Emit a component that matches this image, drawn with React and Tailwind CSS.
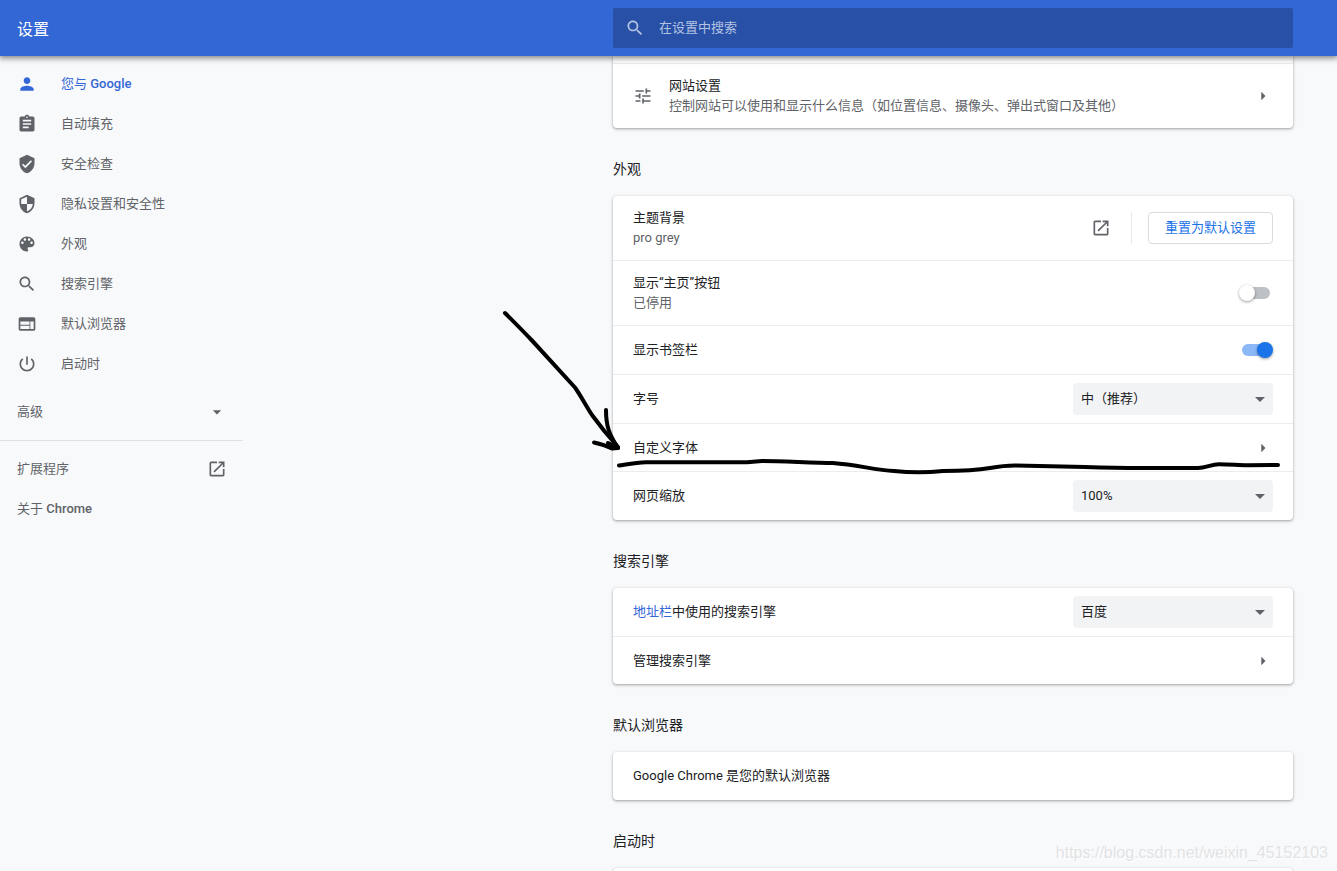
import React from "react";

const PATHS = {
  person:
    "M12 12c2.21 0 4-1.79 4-4s-1.79-4-4-4-4 1.79-4 4 1.79 4 4 4zm0 2c-2.67 0-8 1.34-8 4v2h16v-2c0-2.66-5.33-4-8-4z",
  assignment:
    "M19 3h-4.18C14.4 1.84 13.3 1 12 1c-1.3 0-2.4.84-2.82 2H5c-1.1 0-2 .9-2 2v14c0 1.1.9 2 2 2h14c1.1 0 2-.9 2-2V5c0-1.1-.9-2-2-2zm-7 0c.55 0 1 .45 1 1s-.45 1-1 1-1-.45-1-1 .45-1 1-1zm2 14H7v-2h7v2zm3-4H7v-2h10v2zm0-4H7V7h10v2z",
  verified:
    "M12 1L3 5v6c0 5.55 3.84 10.74 9 12 5.16-1.26 9-6.45 9-12V5l-9-4zm-2 16l-4-4 1.41-1.41L10 14.17l6.59-6.59L18 9l-8 8z",
  security:
    "M12 1L3 5v6c0 5.55 3.84 10.74 9 12 5.16-1.26 9-6.45 9-12V5l-9-4zm0 10.99h7c-.53 4.12-3.28 7.79-7 8.94V12H5V6.3l7-3.11v8.8z",
  palette:
    "M12 3c-4.97 0-9 4.03-9 9s4.03 9 9 9c.83 0 1.5-.67 1.5-1.5 0-.39-.15-.74-.39-1.01-.23-.26-.38-.61-.38-.99 0-.83.67-1.5 1.5-1.5H16c2.76 0 5-2.24 5-5 0-4.42-4.03-8-9-8zm-5.5 9c-.83 0-1.5-.67-1.5-1.5S5.67 9 6.5 9 8 9.67 8 10.5 7.33 12 6.5 12zm3-4C8.67 8 8 7.33 8 6.5S8.67 5 9.5 5s1.5.67 1.5 1.5S10.33 8 9.5 8zm5 0c-.83 0-1.5-.67-1.5-1.5S13.67 5 14.5 5s1.5.67 1.5 1.5S15.33 8 14.5 8zm3 4c-.83 0-1.5-.67-1.5-1.5S16.67 9 17.5 9s1.5.67 1.5 1.5-.67 1.5-1.5 1.5z",
  search:
    "M15.5 14h-.79l-.28-.27C15.41 12.59 16 11.11 16 9.5 16 5.91 13.09 3 9.5 3S3 5.91 3 9.5 5.91 16 9.5 16c1.61 0 3.09-.59 4.23-1.57l.27.28v.79l5 4.99L20.49 19l-4.99-5zm-6 0C7.01 14 5 11.99 5 9.5S7.01 5 9.5 5 14 7.01 14 9.5 11.99 14 9.5 14z",
  web: "M20 4H4c-1.1 0-1.99.9-1.99 2L2 18c0 1.1.9 2 2 2h16c1.1 0 2-.9 2-2V6c0-1.1-.9-2-2-2zm-5 14H4v-4h11v4zm0-5H4V9h11v4zm5 5h-4V9h4v9z",
  power:
    "M13 3h-2v10h2V3zm4.83 2.17l-1.42 1.42C17.99 7.86 19 9.81 19 12c0 3.87-3.13 7-7 7s-7-3.13-7-7c0-2.19 1.01-4.14 2.58-5.42L6.17 5.17C4.23 6.82 3 9.26 3 12c0 4.97 4.03 9 9 9s9-4.03 9-9c0-2.74-1.23-5.18-3.17-6.83z",
  down: "M7 10l5 5 5-5z",
  right: "M10 7l5 5-5 5z",
  launch:
    "M19 19H5V5h7V3H5c-1.11 0-2 .9-2 2v14c0 1.1.89 2 2 2h14c1.1 0 2-.9 2-2v-7h-2v7zM14 3v2h3.59l-9.83 9.83 1.41 1.41L19 6.41V10h2V3h-7z",
  tune: "M3 17v2h6v-2H3zM3 5v2h10V5H3zm10 16v-2h8v-2h-8v-2h-2v6h2zM7 9v2H3v2h4v2h2V9H7zm14 4v-2H11v2h10zm-6-4h2V7h4V5h-4V3h-2v6z",
};

function Icon({ name, className = "" }) {
  return (
    <svg viewBox="0 0 24 24" fill="currentColor" aria-hidden="true" className={`size-5 shrink-0 ${className}`}>
      <path d={PATHS[name]} />
    </svg>
  );
}

const NAV = [
  { icon: "person", label: "您与 ", latin: "Google", active: true },
  { icon: "assignment", label: "自动填充" },
  { icon: "verified", label: "安全检查" },
  { icon: "security", label: "隐私设置和安全性" },
  { icon: "palette", label: "外观" },
  { icon: "search", label: "搜索引擎" },
  { icon: "web", label: "默认浏览器" },
  { icon: "power", label: "启动时" },
];

function Sidebar() {
  return (
    <aside className="w-[243px] shrink-0 pt-2 text-[#5f6368]">
      <nav>
        {NAV.map((item) => (
          <a
            key={item.label}
            href="#"
            className={`flex h-10 items-center gap-6 pl-[17px] ${item.active ? "text-[#3367d6]" : ""}`}
          >
            <Icon name={item.icon} />
            <span>
              {item.label}
              {item.latin && <span className="font-medium">{item.latin}</span>}
            </span>
          </a>
        ))}
        <button type="button" className="mt-2 flex h-10 w-full items-center justify-between pr-4 pl-[17px]">
          <span>高级</span>
          <Icon name="down" />
        </button>
        <div className="my-2 h-px bg-[#e0e1e3]" />
        <a href="#" className="flex h-10 items-center justify-between pr-4 pl-[17px]">
          <span>扩展程序</span>
          <Icon name="launch" />
        </a>
        <a href="#" className="flex h-10 items-center pl-[17px]">
          <span>
            关于 <span className="font-medium">Chrome</span>
          </span>
        </a>
      </nav>
    </aside>
  );
}

function Section({ title, overlay, children }) {
  return (
    <section>
      <h2 className="flex h-[68px] items-center pt-4 pb-0.5 text-sm text-[#202124]">{title}</h2>
      <div className="relative">
        <Card className="rounded">{children}</Card>
        {overlay}
      </div>
    </section>
  );
}

function Card({ className = "", children }) {
  return (
    <div
      className={`divide-y divide-[#ececec] bg-white shadow-[0_1px_2px_0_rgba(60,64,67,0.3),0_1px_3px_1px_rgba(60,64,67,0.15)] ${className}`}
    >
      {children}
    </div>
  );
}

function Row({ tall, children }) {
  return <div className={`box-content flex items-center px-5 ${tall ? "h-16" : "h-12"}`}>{children}</div>;
}

function LinkRow({ tall, icon, title, detail }) {
  return (
    <button type="button" className={`box-content block w-full text-left ${tall ? "h-16" : "h-[47px]"}`}>
      <span className="flex h-full items-center px-5">
        {icon && <Icon name={icon} className="mr-4 text-[#5f6368]" />}
        <span className="flex-1">
          <span className="block">{title}</span>
          {detail && <span className="block text-[#5f6368]">{detail}</span>}
        </span>
        <Icon name="right" className="text-[#5f6368]" />
      </span>
    </button>
  );
}

function Toggle({ id, defaultChecked }) {
  return (
    <input
      id={id}
      type="checkbox"
      role="switch"
      defaultChecked={defaultChecked}
      className="relative mr-[3px] h-3 w-7 shrink-0 appearance-none rounded-full bg-[#bdc1c6] before:absolute before:-top-0.5 before:-left-[3px] before:size-4 before:rounded-full before:bg-white before:shadow-[0_1px_3px_0_rgba(0,0,0,0.4)] checked:bg-[#8cb8f8] checked:before:left-[15px] checked:before:bg-[#1a73e8]"
    />
  );
}

function Select({ id, options }) {
  return (
    <div className="relative w-[200px] shrink-0">
      <select
        id={id}
        className="h-8 w-full appearance-none rounded bg-[#f1f3f4] pr-8 pl-2 text-[#202124]"
      >
        {options.map((o) => (
          <option key={o}>{o}</option>
        ))}
      </select>
      <svg
        viewBox="0 0 10 5"
        aria-hidden="true"
        className="pointer-events-none absolute top-3.5 right-2 h-[5px] w-2.5 fill-[#5f6368]"
      >
        <path d="M0 0h10L5 5z" />
      </svg>
    </div>
  );
}

function InkMarks() {
  return (
    <svg
      aria-hidden="true"
      fill="none"
      stroke="#000"
      strokeWidth="4"
      strokeLinecap="round"
      strokeLinejoin="round"
      className="pointer-events-none absolute top-0 left-0 size-full overflow-visible"
    >
      <path d="M-108 117C-99 126 -90 135 -81 144.500L-38 191.500C-32 200-27 210-21 219C-13 230-4 241 5 251" />
      <path d="M-7 214C-7 230-4 238 5 252L-1 252.500C-8 249-12 248-19 246.500" />
      <path d="M-3 240L5 252L-5 247" />
      <path d="M6 269.500C16 268 24 266.500 33 266.300H134L149 265C170 265 200 267 220 267C245 269 262 274 281 275C296 276.500 315 276.500 330 275C345 275 360 275 377 272C388 270 394 269.500 402 269.500L472 271C500 272 520 272.300 545 272H585C593 272 598 268.300 606 268.300C618 268.300 625 269.300 635 269.300L665 269" />
    </svg>
  );
}

export default function App() {
  return (
    <div className="flex h-screen flex-col overflow-hidden bg-[#f8f9fb] font-['Roboto','Noto_Sans_CJK_SC',sans-serif] text-[13px] leading-5 text-[#202124]">
      <header className="z-10 flex h-14 shrink-0 items-center bg-[#3367d6] pr-11 pl-[17px] shadow-[0_1px_6px_1px_rgba(0,0,0,0.5)]">
        <h1 className="pt-1 text-base text-white">设置</h1>
        <label className="ml-auto flex h-10 w-full max-w-[680px] items-center gap-3.5 rounded-xs bg-[#2850a7] pl-3 text-[#b4c3e2]">
          <Icon name="search" />
          <input
            type="search"
            aria-label="在设置中搜索"
            placeholder="在设置中搜索"
            className="h-full flex-1 bg-transparent pb-0.5 outline-none placeholder:text-[#b4c3e2]"
          />
        </label>
      </header>

      <div className="flex min-h-0 flex-1">
        <Sidebar />
        <main className="mr-11 ml-auto w-full max-w-[680px]">
          <Card className="rounded-b">
            <div className="h-2" />
            <LinkRow
              tall
              icon="tune"
              title="网站设置"
              detail="控制网站可以使用和显示什么信息（如位置信息、摄像头、弹出式窗口及其他）"
            />
          </Card>

          <Section title="外观" overlay={<InkMarks />}>
            <Row tall>
              <div className="flex-1">
                <div>主题背景</div>
                <div className="text-[#5f6368]">pro grey</div>
              </div>
              <a href="#" aria-label="主题背景" className="text-[#5f6368]">
                <Icon name="launch" />
              </a>
              <div className="mr-4 ml-5 h-8 w-px bg-[#e8eaed]" />
              <button type="button" className="h-8 rounded border border-[#dadce0] px-4 text-[#1a73e8]">
                重置为默认设置
              </button>
            </Row>
            <Row tall>
              <label htmlFor="home-button" className="flex-1">
                <span className="block">显示“主页”按钮</span>
                <span className="block text-[#5f6368]">已停用</span>
              </label>
              <Toggle id="home-button" />
            </Row>
            <Row>
              <label htmlFor="bookmarks-bar" className="flex-1">
                显示书签栏
              </label>
              <Toggle id="bookmarks-bar" defaultChecked />
            </Row>
            <Row>
              <label htmlFor="font-size" className="flex-1">
                字号
              </label>
              <Select id="font-size" options={["中（推荐）"]} />
            </Row>
            <LinkRow title="自定义字体" />
            <Row>
              <label htmlFor="page-zoom" className="flex-1">
                网页缩放
              </label>
              <Select id="page-zoom" options={["100%"]} />
            </Row>
          </Section>

          <Section title="搜索引擎">
            <Row>
              <label htmlFor="engine" className="flex-1">
                <a href="#" className="text-[#3367d6]">
                  地址栏
                </a>
                中使用的搜索引擎
              </label>
              <Select id="engine" options={["百度"]} />
            </Row>
            <LinkRow title="管理搜索引擎" />
          </Section>

          <Section title="默认浏览器">
            <Row>Google Chrome 是您的默认浏览器</Row>
          </Section>

          <Section title="启动时">
            <Row />
          </Section>
        </main>
      </div>

      <div className="pointer-events-none absolute right-[9px] bottom-1.5 z-20 font-['Liberation_Sans',sans-serif] text-base leading-6 text-[#e2e3e4] [text-shadow:1px_1px_0_#fff]">
        https://blog.csdn.net/weixin_45152103
      </div>
    </div>
  );
}
